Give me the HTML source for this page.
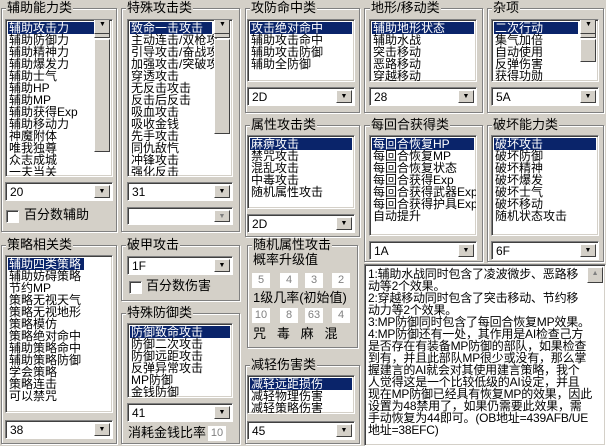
<!DOCTYPE html><html><head><meta charset="utf-8"><style>
*{box-sizing:border-box;margin:0;padding:0}
body{width:606px;height:446px;background:#d4d0c8;position:relative;overflow:hidden;font:12px/12px "Liberation Sans","Noto Sans CJK SC",sans-serif;color:#000}
.g{position:absolute;border:1px solid #808080;box-shadow:1px 1px 0 #fff,inset 1px 1px 0 #fff}
.t{position:absolute;background:#d4d0c8;padding:0 1px;line-height:13px;white-space:nowrap;font-size:13px}
.l{position:absolute;background:#fff;border:1px solid;border-color:#808080 #fff #fff #808080;box-shadow:inset 1px 1px 0 #404040,inset -1px -1px 0 #d4d0c8;padding:2px;overflow:hidden;white-space:nowrap}
.l div{height:12px;line-height:12px;padding-left:1px}
.s{background:#0a246a;color:#fff}
.c{position:absolute;background:#fff;border:1px solid;border-color:#808080 #fff #fff #808080;box-shadow:inset 1px 1px 0 #404040;padding:3px 4px;line-height:12px;height:19px}
.b{position:absolute;right:2px;top:2px;width:16px;bottom:2px;background:#d4d0c8;border:1px solid;border-color:#fff #404040 #404040 #fff;font-size:7px;line-height:12px;text-align:center}
.sb{position:absolute;top:2px;right:2px;bottom:2px;width:16px;background:#e8e6e2}
.th{position:absolute;left:0;width:16px;background:#d4d0c8;border:1px solid;border-color:#fff #404040 #404040 #fff;font-size:7px;text-align:center;line-height:14px}
.bx{position:absolute;width:18px;height:15px;background:#fff;color:#808080;text-align:center;line-height:14px;font-size:11px}
.ck{position:absolute;width:13px;height:13px;background:#fff;border:1px solid;border-color:#808080 #fff #fff #808080;box-shadow:inset 1px 1px 0 #404040}
.a{position:absolute;white-space:nowrap;font-size:13px}
.ta div{height:12px;line-height:12px;padding-left:0;letter-spacing:-0.2px}
</style></head><body>
<div class="g" style="left:1px;top:8px;width:116px;height:224px"></div><span class="t" style="left:6px;top:1px">辅助能力类</span>
<div class="l" style="left:5px;top:19px;width:108px;height:158px"><div class="s">辅助攻击力</div><div>辅助防御力</div><div>辅助精神力</div><div>辅助爆发力</div><div>辅助士气</div><div>辅助HP</div><div>辅助MP</div><div>辅助获得Exp</div><div>辅助移动力</div><div>神魔附体</div><div>唯我独尊</div><div>众志成城</div><div>一夫当关</div>
<div class="sb"><div class="th" style="top:0;height:16px">▲</div><div class="th" style="top:17px;height:113px"></div><div class="th" style="bottom:0;height:16px">▼</div></div></div>
<div class="c" style="left:5px;top:182px;width:108px">20<div class="b">▼</div></div>
<div class="ck" style="left:6px;top:210px"></div><span class="a" style="left:24px;top:209px">百分数辅助</span>

<div class="g" style="left:121px;top:8px;width:119px;height:224px"></div><span class="t" style="left:126px;top:1px">特殊攻击类</span>
<div class="l" style="left:127px;top:19px;width:106px;height:158px"><div class="s" style="margin-right:18px">致命一击攻击</div><div>主动连击/双枪攻</div><div>引导攻击/奋战攻</div><div>加强攻击/突破攻</div><div>穿透攻击</div><div>无反击攻击</div><div>反击后反击</div><div>吸血攻击</div><div>吸收金钱</div><div>先手攻击</div><div>同仇敌忾</div><div>冲锋攻击</div><div>强化反击</div>
<div class="sb"><div class="th" style="top:0;height:16px">▲</div><div class="th" style="top:17px;height:95px"></div><div class="th" style="bottom:0;height:16px">▼</div></div></div>
<div class="c" style="left:127px;top:182px;width:106px">31<div class="b">▼</div></div>
<div class="c" style="left:127px;top:207px;width:106px;height:18px"><div class="b" style="color:#808080">▼</div></div>

<div class="g" style="left:245px;top:8px;width:115px;height:105px"></div><span class="t" style="left:250px;top:1px">攻防命中类</span>
<div class="l" style="left:247px;top:19px;width:108px;height:63px"><div class="s">攻击绝对命中</div><div>辅助攻击命中</div><div>辅助攻击防御</div><div>辅助全防御</div></div>
<div class="c" style="left:247px;top:87px;width:108px">2D<div class="b">▼</div></div>

<div class="g" style="left:364px;top:8px;width:119px;height:105px"></div><span class="t" style="left:370px;top:1px">地形/移动类</span>
<div class="l" style="left:369px;top:19px;width:108px;height:63px"><div class="s">辅助地形状态</div><div>辅助水战</div><div>突击移动</div><div>恶路移动</div><div>穿越移动</div></div>
<div class="c" style="left:369px;top:87px;width:108px">28<div class="b">▼</div></div>

<div class="g" style="left:487px;top:8px;width:117px;height:105px"></div><span class="t" style="left:492px;top:1px">杂项</span>
<div class="l" style="left:491px;top:19px;width:108px;height:63px"><div class="s" style="margin-right:18px">二次行动</div><div>集气加倍</div><div>自动使用</div><div>反弹伤害</div><div>获得功勋</div>
<div class="sb"><div class="th" style="top:0;height:16px">▲</div><div class="th" style="top:17px;height:23px"></div><div class="th" style="bottom:0;height:16px">▼</div></div></div>
<div class="c" style="left:491px;top:87px;width:108px">5A<div class="b">▼</div></div>

<div class="g" style="left:245px;top:125px;width:115px;height:112px"></div><span class="t" style="left:250px;top:118px">属性攻击类</span>
<div class="l" style="left:247px;top:135px;width:108px;height:74px"><div class="s">麻痹攻击</div><div>禁咒攻击</div><div>混乱攻击</div><div>中毒攻击</div><div>随机属性攻击</div></div>
<div class="c" style="left:247px;top:214px;width:108px">2D<div class="b">▼</div></div>

<div class="g" style="left:364px;top:125px;width:119px;height:137px"></div><span class="t" style="left:370px;top:118px">每回合获得类</span>
<div class="l" style="left:369px;top:135px;width:108px;height:101px"><div class="s">每回合恢复HP</div><div>每回合恢复MP</div><div>每回合恢复状态</div><div>每回合获得Exp</div><div>每回合获得武器Exp</div><div>每回合获得护具Exp</div><div>自动提升</div></div>
<div class="c" style="left:369px;top:241px;width:108px">1A<div class="b">▼</div></div>

<div class="g" style="left:487px;top:125px;width:117px;height:137px"></div><span class="t" style="left:492px;top:118px">破坏能力类</span>
<div class="l" style="left:491px;top:135px;width:108px;height:101px"><div class="s">破坏攻击</div><div>破坏防御</div><div>破坏精神</div><div>破坏爆发</div><div>破坏士气</div><div>破坏移动</div><div>随机状态攻击</div></div>
<div class="c" style="left:491px;top:241px;width:108px">6F<div class="b">▼</div></div>

<div class="g" style="left:1px;top:245px;width:116px;height:199px"></div><span class="t" style="left:6px;top:238px">策略相关类</span>
<div class="l" style="left:5px;top:255px;width:108px;height:158px"><div class="s" style="width:76px">辅助四类策略</div><div>辅助妨碍策略</div><div>节约MP</div><div>策略无视天气</div><div>策略无视地形</div><div>策略模仿</div><div>策略绝对命中</div><div>辅助策略命中</div><div>辅助策略防御</div><div>学会策略</div><div>策略连击</div><div>可以禁咒</div></div>
<div class="c" style="left:5px;top:420px;width:108px">38<div class="b">▼</div></div>

<div class="g" style="left:121px;top:245px;width:119px;height:56px"></div><span class="t" style="left:126px;top:238px">破甲攻击</span>
<div class="c" style="left:127px;top:256px;width:106px">1F<div class="b">▼</div></div>
<div class="ck" style="left:129px;top:281px"></div><span class="a" style="left:146px;top:280px">百分数伤害</span>

<div class="g" style="left:121px;top:313px;width:119px;height:131px"></div><span class="t" style="left:126px;top:306px">特殊防御类</span>
<div class="l" style="left:127px;top:323px;width:106px;height:75px"><div class="s">防御致命攻击</div><div>防御二次攻击</div><div>防御远距攻击</div><div>反弹异常攻击</div><div>MP防御</div><div>金钱防御</div></div>
<div class="c" style="left:127px;top:403px;width:106px">41<div class="b">▼</div></div>
<span class="a" style="left:128px;top:427px">消耗金钱比率</span><div class="bx" style="left:208px;top:426px">10</div>

<div class="g" style="left:247px;top:245px;width:111px;height:103px"></div><span class="t" style="left:252px;top:238px">随机属性攻击</span>
<span class="a" style="left:253px;top:254px">概率升级值</span>
<div class="bx" style="left:252px;top:273px">5</div><div class="bx" style="left:280px;top:273px">4</div><div class="bx" style="left:305px;top:273px">3</div><div class="bx" style="left:332px;top:273px">2</div>
<span class="a" style="left:253px;top:292px">1级几率(初始值)</span>
<div class="bx" style="left:252px;top:308px">10</div><div class="bx" style="left:280px;top:308px">8</div><div class="bx" style="left:305px;top:308px">63</div><div class="bx" style="left:332px;top:308px">4</div>
<span class="a" style="left:253px;top:328px">咒&nbsp;&nbsp;&nbsp;毒&nbsp;&nbsp;&nbsp;麻&nbsp;&nbsp;&nbsp;混</span>

<div class="g" style="left:245px;top:365px;width:115px;height:79px"></div><span class="t" style="left:250px;top:358px">减轻伤害类</span>
<div class="l" style="left:247px;top:375px;width:108px;height:39px"><div class="s">减轻远距损伤</div><div>减轻物理伤害</div><div>减轻策略伤害</div></div>
<div class="c" style="left:247px;top:421px;width:108px">45<div class="b">▼</div></div>

<div class="l ta" style="left:364px;top:264px;width:242px;height:182px;padding:3px 18px 0 3px">
<div>1:辅助水战同时包含了凌波微步、恶路移</div><div>动等2个效果。</div><div>2:穿越移动同时包含了突击移动、节约移</div><div>动力等2个效果。</div><div>3:MP防御同时包含了每回合恢复MP效果。</div><div>4:MP防御还有一处，其作用是AI检查己方</div><div>是否存在有装备MP防御的部队，如果检查</div><div>到有，并且此部队MP很少或没有，那么掌</div><div>握建言的AI就会对其使用建言策略，我个</div><div>人觉得这是一个比较低级的AI设定，并且</div><div>现在MP防御已经具有恢复MP的效果，因此</div><div>设置为48禁用了，如果仍需要此效果，需</div><div>手动恢复为44即可。(OB地址=439AFB/UE</div><div>地址=38EFC)</div>
<div class="sb" style="background:#e0ded9"><div class="th" style="top:0;height:16px;color:#808080">▲</div></div></div>
</body></html>
